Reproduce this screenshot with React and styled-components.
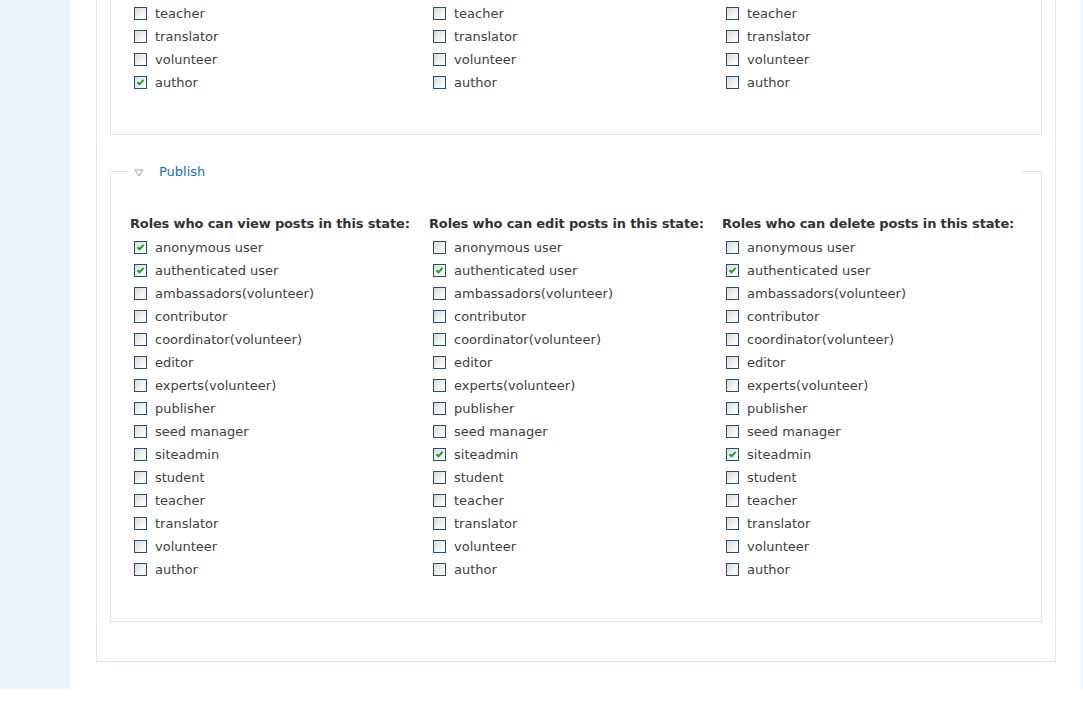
import styled, { createGlobalStyle } from 'styled-components';

const ROLES = [
    'anonymous user',
    'authenticated user',
    'ambassadors(volunteer)',
    'contributor',
    'coordinator(volunteer)',
    'editor',
    'experts(volunteer)',
    'publisher',
    'seed manager',
    'siteadmin',
    'student',
    'teacher',
    'translator',
    'volunteer',
    'author',
];

const STATES = [
    {
        name: 'Draft',
        view: ['authenticated user', 'siteadmin', 'author'],
        edit: ['siteadmin'],
        delete: ['siteadmin'],
    },
    {
        name: 'Publish',
        view: ['anonymous user', 'authenticated user'],
        edit: ['authenticated user', 'siteadmin'],
        delete: ['authenticated user', 'siteadmin'],
    },
];

const ACTIONS = ['view', 'edit', 'delete'];

const GlobalStyle = createGlobalStyle`
    html, body {
        margin: 0;
        padding: 0;
        background: #ffffff;
    }
    body {
        font-family: "DejaVu Sans", Verdana, sans-serif;
        font-size: 13px;
        color: #404040;
        overflow: hidden;
    }
`;

function CheckBox({ checked }) {
    return (
        <Box>
            {checked && (
                <svg width="9" height="9" viewBox="0 0 9 9">
                    <path
                        d="M1.5 4.2 L3.5 6.3 L7.6 1.8"
                        fill="none"
                        stroke="#22a022"
                        strokeWidth="2"
                    />
                </svg>
            )}
        </Box>
    );
}

function StateFieldset({ state }) {
    return (
        <Fieldset>
            <Legend>
                <Toggle width="10" height="8" viewBox="0 0 10 8">
                    <polygon
                        points="1,1 9,1 5,7"
                        fill="#fff"
                        stroke="#a8a8a8"
                        strokeWidth="1"
                    />
                </Toggle>
                <LegendText>{state.name}</LegendText>
            </Legend>
            <Columns>
                {ACTIONS.map((action) => (
                    <Column key={action}>
                        <Heading>Roles who can {action} posts in this state:</Heading>
                        {ROLES.map((role) => (
                            <Row key={role}>
                                <CheckBox checked={state[action].includes(role)} />
                                <Label>{role}</Label>
                            </Row>
                        ))}
                    </Column>
                ))}
            </Columns>
        </Fieldset>
    );
}

export default function App() {
    return (
        <>
            <GlobalStyle />
            <Shell>
                <Sidebar />
                <Main>
                    <StateBox>
                        {STATES.map((state) => (
                            <StateFieldset key={state.name} state={state} />
                        ))}
                    </StateBox>
                </Main>
                <Rail />
            </Shell>
            <Footer />
        </>
    );
}

const Shell = styled.div`
    display: flex;
    margin-top: -337px;
`;

const Sidebar = styled.div`
    width: 70px;
    flex-shrink: 0;
    background: #ebf3fb;
`;

const Rail = styled.div`
    width: 3px;
    flex-shrink: 0;
    background: #ebf3fb;
`;

const Main = styled.div`
    flex: 1;
    padding: 0 25px 27px 26px;
`;

const StateBox = styled.div`
    border: 1px solid #dbe7ef;
    padding: 13px 13px 39px;
    display: flex;
    flex-direction: column;
    gap: 29px;
`;

const Fieldset = styled.fieldset`
    margin: 0;
    min-width: 0;
    border: 1px solid #d5e6f1;
    padding: 34px 19px 40px;
`;

const Legend = styled.legend`
    width: 894px;
    height: 14px;
    margin-left: -2px;
    padding: 0;
    display: flex;
    align-items: flex-start;
`;

const Toggle = styled.svg`
    margin-left: 6px;
    margin-right: 15px;
    margin-top: 5px;
`;

const LegendText = styled.span`
    color: #0a76bc;
    line-height: 16px;
`;

const Columns = styled.div`
    display: grid;
    grid-template-columns: 299px 293px 1fr;
`;

const Column = styled.div`
    display: flex;
    flex-direction: column;
`;

const Heading = styled.div`
    font-weight: bold;
    color: #333333;
    line-height: 24px;
    letter-spacing: -0.15px;
    white-space: nowrap;
`;

const Row = styled.label`
    display: flex;
    align-items: center;
    height: 23px;
`;

const Box = styled.span`
    box-sizing: border-box;
    width: 13px;
    height: 13px;
    margin-left: 4px;
    margin-right: 8px;
    border: 1px solid #1c5180;
    background: linear-gradient(135deg, #dcdcd6 0%, #f2f2ef 60%, #ffffff 100%);
    display: flex;
    align-items: center;
    justify-content: center;
`;

const Label = styled.span`
    white-space: nowrap;
    line-height: 23px;
`;

const Footer = styled.div`
    height: 22px;
`;
